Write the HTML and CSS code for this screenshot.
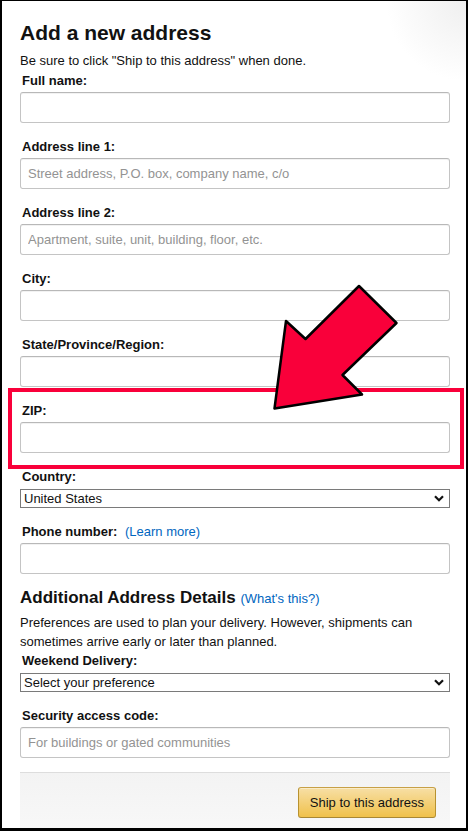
FILE: index.html
```html
<!DOCTYPE html>
<html lang="en">
<head>
    <meta charset="UTF-8">
    <title>Add a new address</title>
    <link rel="stylesheet" href="styles.css">
</head>
<body>
    <div id="address-frame">
        <h1 class="page-title">Add a new address</h1>
        <p class="hint">Be sure to click "Ship to this address" when done.</p>

        <div class="field">
            <label class="form-label">Full name:</label>
            <input class="text-input" type="text">
        </div>
        <div class="field">
            <label class="form-label">Address line 1:</label>
            <input class="text-input" type="text" placeholder="Street address, P.O. box, company name, c/o">
        </div>
        <div class="field">
            <label class="form-label">Address line 2:</label>
            <input class="text-input" type="text" placeholder="Apartment, suite, unit, building, floor, etc.">
        </div>
        <div class="field">
            <label class="form-label">City:</label>
            <input class="text-input" type="text">
        </div>
        <div class="field">
            <label class="form-label">State/Province/Region:</label>
            <input class="text-input" type="text">
        </div>
        <div class="field">
            <label class="form-label">ZIP:</label>
            <input class="text-input" type="text">
        </div>
        <div class="field">
            <label class="form-label">Country:</label>
            <div class="select-box">
                <select class="dropdown">
                    <option>United States</option>
                </select>
                <svg class="chevron" width="10" height="7" viewBox="0 0 10 7">
                    <path d="M1 1.2 L5 5.2 L9 1.2" fill="none" stroke="#111" stroke-width="2.2"/>
                </svg>
            </div>
        </div>
        <div class="field field-last">
            <label class="form-label">Phone number: <a class="link" href="#">(Learn more)</a></label>
            <input class="text-input" type="tel">
        </div>

        <h3 class="section-title">Additional Address Details <a class="link" href="#">(What's this?)</a></h3>
        <p class="hint hint-tight">Preferences are used to plan your delivery. However, shipments can sometimes arrive early or later than planned.</p>

        <div class="field">
            <label class="form-label">Weekend Delivery:</label>
            <div class="select-box">
                <select class="dropdown">
                    <option>Select your preference</option>
                </select>
                <svg class="chevron" width="10" height="7" viewBox="0 0 10 7">
                    <path d="M1 1.2 L5 5.2 L9 1.2" fill="none" stroke="#111" stroke-width="2.2"/>
                </svg>
            </div>
        </div>
        <div class="field">
            <label class="form-label">Security access code:</label>
            <input class="text-input" type="text" placeholder="For buildings or gated communities">
        </div>

        <div class="form-footer">
            <button class="primary-button">Ship to this address</button>
        </div>

        <!-- annotation drawn over the form -->
        <div class="highlight-box"></div>
        <svg class="pointer-arrow" width="150" height="140" viewBox="260 275 150 140">
            <polygon points="359,286 396.5,323 342.5,375 362,394.5 274.5,408.5 286,321 305.5,339"
                     fill="#f9003a" stroke="#000" stroke-width="2.5" stroke-linejoin="round"/>
        </svg>
    </div>
</body>
</html>
```

FILE: styles.css
```css
body {
    margin: 0;
    background-color: white;
    font-family: "Liberation Sans", Arial, sans-serif;
    color: #111;
}

#address-frame {
    position: relative;
    box-sizing: border-box;
    height: 831px;
    overflow: hidden;
    border: 2px solid black;
    border-top-width: 1px;
    border-bottom-width: 3px;
    padding: 20px 16px 0 18px;
    background: radial-gradient(circle at 100% 0, #efefef 0, #ffffff 80px);
}

.page-title {
    margin: 0 0 6px 0;
    font-size: 21px;
    line-height: 24px;
    font-weight: bold;
}

.hint {
    margin: 0 0 1px 0;
    font-size: 13px;
    line-height: 19px;
}

.hint-tight {
    margin-bottom: 0;
}

.field {
    margin-bottom: 14px;
}

.field-last {
    margin-bottom: 12px;
}

.form-label {
    display: block;
    padding: 0 0 2px 2px;
    font-size: 13px;
    line-height: 19px;
    font-weight: bold;
}

.form-label .link {
    margin-left: 4px;
    font-weight: normal;
}

.link {
    color: #0066c0;
    text-decoration: none;
    font-size: 13px;
    font-weight: normal;
}

.text-input {
    display: block;
    box-sizing: border-box;
    width: 100%;
    height: 31px;
    margin: 0;
    padding: 3px 7px;
    font-family: "Liberation Sans", Arial, sans-serif;
    font-size: 13px;
    color: #111;
    background-color: white;
    border: 1px solid #c4c4c4;
    border-top-color: #b8b8b8;
    border-radius: 3px;
    box-shadow: 0 1px 0 rgba(0, 0, 0, 0.05) inset;
    outline: none;
}

.text-input::placeholder {
    color: #939393;
}

.select-box {
    display: flex;
    align-items: center;
    box-sizing: border-box;
    height: 19px;
    margin-top: 1px;
    border: 1px solid #7a7a7a;
    background-color: white;
}

.dropdown {
    flex: 1;
    min-width: 0;
    height: 100%;
    margin: 0;
    padding: 0 0 0 3px;
    border: none;
    outline: none;
    background: transparent;
    -webkit-appearance: none;
    appearance: none;
    font-family: "Liberation Sans", Arial, sans-serif;
    font-size: 13px;
    color: #111;
}

.chevron {
    margin-right: 5px;
}

.section-title {
    margin: 0 0 2px 0;
    font-size: 17px;
    line-height: 24px;
    font-weight: bold;
}

.form-footer {
    display: flex;
    justify-content: flex-end;
    height: 60px;
    padding: 14px 14px 0 0;
    border-top: 1px solid #dddddd;
    background: linear-gradient(#f3f3f3, #f9f9f9);
}

.primary-button {
    box-sizing: border-box;
    height: 31px;
    padding: 0 11px;
    font-family: "Liberation Sans", Arial, sans-serif;
    font-size: 13px;
    color: #111;
    background: linear-gradient(#f7dfa5, #f0c14b);
    border: 1px solid;
    border-color: #c7a046 #b8922f #a88734;
    border-radius: 3px;
    box-shadow: 0 1px 0 rgba(255, 255, 255, 0.4) inset;
    cursor: pointer;
}

.highlight-box {
    position: absolute;
    left: 6px;
    top: 387px;
    box-sizing: border-box;
    width: 456px;
    height: 81px;
    border: 4px solid #f9003a;
}

.pointer-arrow {
    position: absolute;
    left: 258px;
    top: 274px;
}
```
